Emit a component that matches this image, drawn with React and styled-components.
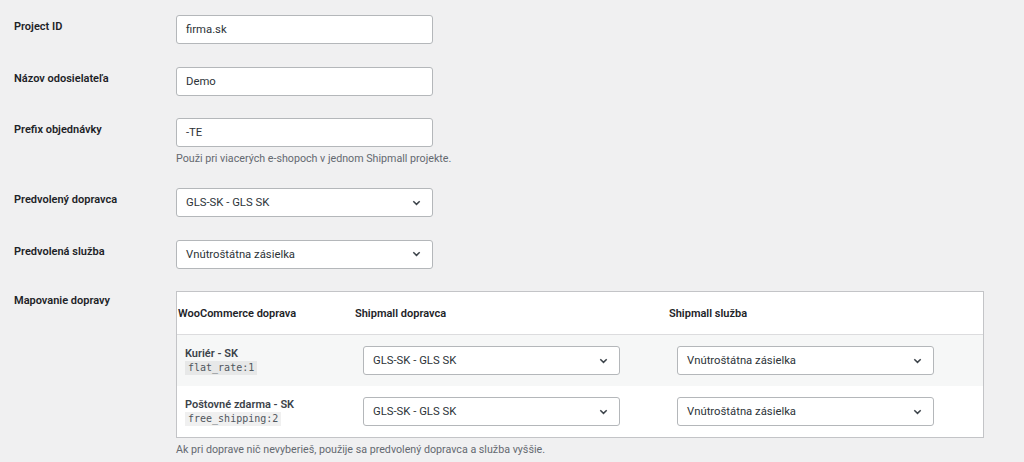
import React from 'react'
import styled, { createGlobalStyle } from 'styled-components'

const GlobalStyle = createGlobalStyle`
  body {
    margin: 0;
    background: #f0f0f1;
    font-family: 'Roboto', 'Liberation Sans', sans-serif;
    color: #1d2327;
  }
`

const Chevron = () => (
  <svg width='9' height='6' viewBox='0 0 9 6' fill='none'>
    <path d='M1.3 1.3l3.2 3.1 3.2-3.1' stroke='#3c434a' strokeWidth='1.5' />
  </svg>
)

const Select = ({ value, width }) => (
  <SelectBox $width={width}>
    <span>{value}</span>
    <Chevron />
  </SelectBox>
)

const App = () => {
  const methods = [
    { name: 'Kuriér - SK', code: 'flat_rate:1' },
    { name: 'Poštovné zdarma - SK', code: 'free_shipping:2' },
  ]

  return (
    <>
      <GlobalStyle />
      <Wrapper>
        <Row>
          <Label>Project ID</Label>
          <Field>
            <Input>firma.sk</Input>
          </Field>
        </Row>
        <Row>
          <Label>Názov odosielateľa</Label>
          <Field>
            <Input>Demo</Input>
          </Field>
        </Row>
        <Row>
          <Label>Prefix objednávky</Label>
          <Field>
            <Input>-TE</Input>
            <Description>
              Použi pri viacerých e-shopoch v jednom Shipmall projekte.
            </Description>
          </Field>
        </Row>
        <Row>
          <Label>Predvolený dopravca</Label>
          <Field>
            <Select value='GLS-SK - GLS SK' />
          </Field>
        </Row>
        <Row>
          <Label>Predvolená služba</Label>
          <Field>
            <Select value='Vnútroštátna zásielka' />
          </Field>
        </Row>
        <Row>
          <Label $offset={3}>Mapovanie dopravy</Label>
          <Field>
            <MapTable>
              <HeadRow>
                <HeadCell $first>WooCommerce doprava</HeadCell>
                <HeadCell>Shipmall dopravca</HeadCell>
                <HeadCell>Shipmall služba</HeadCell>
              </HeadRow>
              {methods.map((m, i) => (
                <BodyRow key={m.code} $striped={i % 2 === 0}>
                  <MethodCell>
                    <MethodName>{m.name}</MethodName>
                    <Code>{m.code}</Code>
                  </MethodCell>
                  <SelectCell>
                    <Select value='GLS-SK - GLS SK' />
                  </SelectCell>
                  <SelectCell>
                    <Select value='Vnútroštátna zásielka' />
                  </SelectCell>
                </BodyRow>
              ))}
            </MapTable>
            <Description $gap={5}>
              Ak pri doprave nič nevyberieš, použije sa predvolený dopravca a
              služba vyššie.
            </Description>
          </Field>
        </Row>
      </Wrapper>
    </>
  )
}

const Wrapper = styled.div`
  padding: 15px 0 0 14px;
  display: flex;
  flex-direction: column;
  gap: 22.5px;
`

const Row = styled.div`
  display: grid;
  grid-template-columns: 162px 1fr;
  align-items: start;
`

const Label = styled.div`
  font-size: 11px;
  line-height: 14px;
  font-weight: 600;
  padding-top: ${(p) => (p.$offset !== undefined ? p.$offset : 5)}px;
`

const Field = styled.div`
  display: flex;
  flex-direction: column;
  align-items: flex-start;
`

const Input = styled.div`
  box-sizing: border-box;
  width: 257px;
  height: 29px;
  background: #fff;
  border: 1px solid #b4b7ba;
  border-radius: 3px;
  padding: 0 9px;
  display: flex;
  align-items: center;
  font-size: 11.3px;
  color: #2c3338;
`

const SelectBox = styled(Input)`
  width: ${(p) => p.$width || 257}px;
  justify-content: space-between;
  padding: 0 10px 0 9px;
  svg {
    margin-right: 1px;
  }
`

const Description = styled.p`
  margin: ${(p) => p.$gap || 4.5}px 0 0;
  font-size: 10.7px;
  line-height: 14px;
  color: #646970;
`

const MapTable = styled.div`
  box-sizing: border-box;
  width: 808px;
  background: #fff;
  border: 1px solid #c3c4c7;
`

const HeadRow = styled.div`
  display: grid;
  grid-template-columns: 178px 314px 1fr;
  height: 42px;
  align-items: center;
  border-bottom: 1px solid #dcdcde;
`

const HeadCell = styled.div`
  font-size: 11px;
  font-weight: 600;
  padding-left: ${(p) => (p.$first ? 1 : 0)}px;
`

const BodyRow = styled.div`
  display: grid;
  grid-template-columns: 178px 314px 1fr;
  height: 51px;
  align-items: start;
  background: ${(p) => (p.$striped ? '#f6f7f7' : '#fff')};
`

const MethodCell = styled.div`
  padding: 12px 0 0 8px;
  display: flex;
  flex-direction: column;
  align-items: flex-start;
`

const MethodName = styled.div`
  font-size: 11px;
  line-height: 13px;
  font-weight: 600;
  color: #3c434a;
`

const Code = styled.code`
  margin-top: 1px;
  background: rgba(0, 0, 0, 0.06);
  font-family: 'DejaVu Sans Mono', 'Liberation Mono', monospace;
  font-size: 10px;
  line-height: 14px;
  padding: 0 3px;
  color: #50575e;
`

const SelectCell = styled.div`
  padding: 11px 0 0 8px;
`

export default App
